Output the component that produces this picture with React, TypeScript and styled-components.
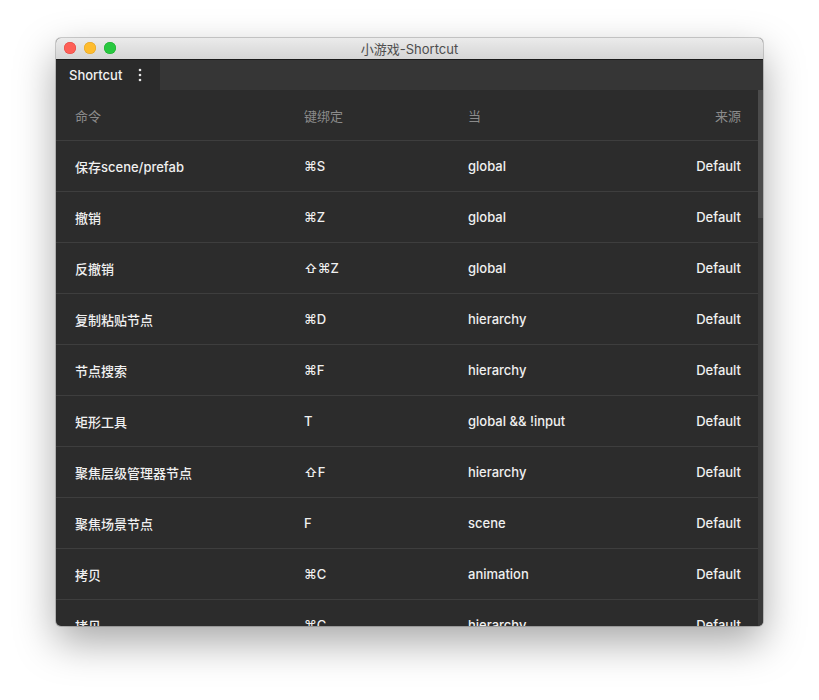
import React from 'react';
import styled, {createGlobalStyle} from "styled-components";

const GlobalStyle = createGlobalStyle`
  html, body {
    margin: 0;
    padding: 0;
    background: #ffffff;
    font-family: Inter, "Noto Sans CJK SC", sans-serif;
  }
`

const Page = styled.div`
  width: 819px;
  height: 700px;
  padding: 38px 0 0 56px;
  box-sizing: border-box;
`

const Window = styled.div`
  width: 707px;
  height: 588px;
  border-radius: 5px;
  overflow: hidden;
  display: flex;
  flex-direction: column;
  background: #2c2c2c;
  box-shadow: 0 16px 40px rgba(0, 0, 0, 0.35), 0 0 0 1px rgba(0, 0, 0, 0.18);
`

const TitleBar = styled.div`
  height: 22px;
  flex-shrink: 0;
  position: relative;
  display: flex;
  align-items: center;
  justify-content: center;
  background: linear-gradient(#ebebeb, #d5d5d5);
  border-bottom: 1px solid #1a1a1a;
  box-sizing: border-box;
  color: #4d4d4d;
  font-size: 13px;
`

const Lights = styled.div`
  position: absolute;
  left: 8px;
  top: 4px;
  display: flex;
  gap: 8px;
`

const Light = styled.span<{ $color: string; $edge: string }>`
  width: 12px;
  height: 12px;
  border-radius: 50%;
  background: ${p => p.$color};
  box-shadow: inset 0 0 0 0.5px ${p => p.$edge};
`

const TabBar = styled.div`
  height: 30px;
  flex-shrink: 0;
  display: flex;
  background: #363636;
`

const Tab = styled.div`
  width: 104px;
  display: flex;
  align-items: center;
  padding-left: 13px;
  box-sizing: border-box;
  background: #2b2b2b;
  color: #f2f2f2;
  font-size: 13px;
  font-weight: 500;
  gap: 16px;
`

const Body = styled.div`
  flex: 1;
  display: flex;
  overflow: hidden;
`

const Table = styled.div`
  flex: 1;
  overflow: hidden;
`

const Row = styled.div<{ $head?: boolean }>`
  height: 50px;
  display: grid;
  grid-template-columns: 229px 164px 1fr auto;
  align-items: center;
  padding: 0 17px 0 19px;
  border-bottom: 1px solid #3e3e3e;
  font-size: 13px;
  color: ${p => p.$head ? '#8b8b8b' : '#f0f0f0'};
  font-weight: ${p => p.$head ? 400 : 500};
`

const Right = styled.span`
  text-align: right;
`

const ScrollTrack = styled.div`
  width: 5px;
  background: #393939;
  display: flex;
  flex-direction: column;
`

const ScrollThumb = styled.div`
  height: 128px;
  background: #4b4b4b;
`

const rows = [
    ['保存scene/prefab', '⌘S', 'global'],
    ['撤销', '⌘Z', 'global'],
    ['反撤销', '⇧⌘Z', 'global'],
    ['复制粘贴节点', '⌘D', 'hierarchy'],
    ['节点搜索', '⌘F', 'hierarchy'],
    ['矩形工具', 'T', 'global && !input'],
    ['聚焦层级管理器节点', '⇧F', 'hierarchy'],
    ['聚焦场景节点', 'F', 'scene'],
    ['拷贝', '⌘C', 'animation'],
    ['拷贝', '⌘C', 'hierarchy'],
]

const App = () => {
    return (
        <Page>
            <GlobalStyle/>
            <Window>
                <TitleBar>
                    <Lights>
                        <Light $color="#fe5f57" $edge="#e0443e"/>
                        <Light $color="#febc2e" $edge="#dea123"/>
                        <Light $color="#28c840" $edge="#1aab29"/>
                    </Lights>
                    小游戏-Shortcut
                </TitleBar>
                <TabBar>
                    <Tab>
                        Shortcut
                        <svg width="4" height="14" viewBox="0 0 4 14">
                            <circle cx="2" cy="2" r="1.3" fill="#e6e6e6"/>
                            <circle cx="2" cy="7" r="1.3" fill="#e6e6e6"/>
                            <circle cx="2" cy="12" r="1.3" fill="#e6e6e6"/>
                        </svg>
                    </Tab>
                </TabBar>
                <Body>
                    <Table>
                        <Row $head>
                            <span>命令</span>
                            <span>键绑定</span>
                            <span>当</span>
                            <Right>来源</Right>
                        </Row>
                        {rows.map((r, i) => (
                            <Row key={i}>
                                <span>{r[0]}</span>
                                <span>{r[1]}</span>
                                <span>{r[2]}</span>
                                <Right>Default</Right>
                            </Row>
                        ))}
                    </Table>
                    <ScrollTrack>
                        <ScrollThumb/>
                    </ScrollTrack>
                </Body>
            </Window>
        </Page>
    );
}

export default App;
